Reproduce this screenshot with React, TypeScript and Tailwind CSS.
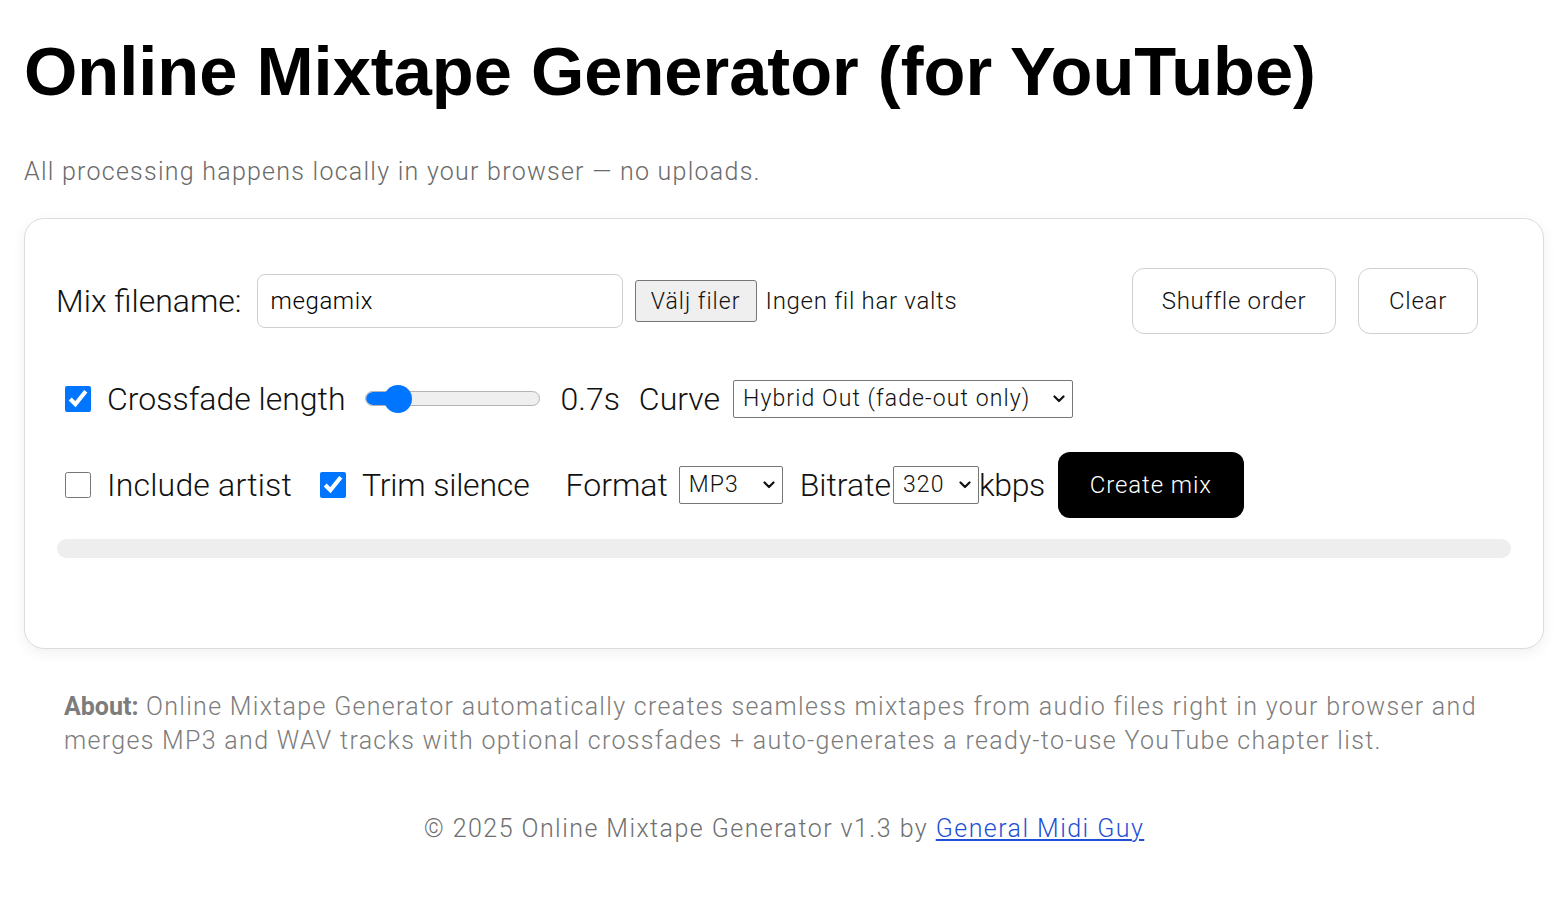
import React from "react";

function Chevron() {
  return (
    <svg width="12" height="8" viewBox="0 0 12 8" className="shrink-0">
      <path d="M1.5 1.5 L6 6 L10.5 1.5" fill="none" stroke="#111" strokeWidth="2.2" strokeLinecap="round" strokeLinejoin="round" />
    </svg>
  );
}

function FakeSelect({ label, width }: { label: string; width: string }) {
  return (
    <div className={`flex items-center justify-between border border-[#767676] rounded-[2px] bg-white pl-[9px] pr-[7px] h-[38px] text-[23px] tracking-[1.1px] text-[#111] ${width}`}>
      <span className="whitespace-nowrap leading-none">{label}</span>
      <Chevron />
    </div>
  );
}

export default function App() {
  return (
    <div className="min-h-[900px] bg-white font-['Roboto',Arial,sans-serif] font-light text-[#111]">
      <h1 className="pt-[38px] px-6 font-['Liberation_Sans',Arial,sans-serif] font-bold text-[68.6px] leading-none text-black whitespace-nowrap">
        Online Mixtape Generator (for YouTube)
      </h1>
      <p className="mt-[52px] px-6 text-[25px] tracking-[1.25px] leading-none text-[#6a6a6a]">
        All processing happens locally in your browser — no uploads.
      </p>

      <div className="mx-6 mt-[34px] border border-[#dcdcdc] rounded-[20px] shadow-[0_4px_14px_rgba(0,0,0,0.06)] bg-white px-[31px] pt-[49px] pb-[90px]">
        {/* Row 1 */}
        <div className="flex items-center h-[66px]">
          <span className="text-[32px] leading-none whitespace-nowrap">Mix filename:</span>
          <div className="ml-[15px] w-[366px] h-[54px] border border-[#cfcfcf] rounded-[8px] flex items-center px-[13px] text-[24px] tracking-[0.6px] text-black">
            megamix
          </div>
          <div className="ml-[12px] h-[42px] w-[122px] flex items-center justify-center bg-[#efefef] border border-[#767676] rounded-[3px] text-[23px] tracking-[1px] whitespace-nowrap">
            <span className="leading-none pt-[2px]">Välj filer</span>
          </div>
          <span className="ml-[9px] text-[24px] tracking-[0.7px] whitespace-nowrap">Ingen fil har valts</span>
          <div className="ml-auto mr-[34px] flex items-center gap-[22px]">
            <div className="w-[204px] h-[66px] border border-[#d0d0d0] rounded-[12px] flex items-center justify-center text-[24px] tracking-[0.7px] whitespace-nowrap">
              Shuffle order
            </div>
            <div className="w-[120px] h-[66px] border border-[#d0d0d0] rounded-[12px] flex items-center justify-center text-[24px] tracking-[0.7px]">
              Clear
            </div>
          </div>
        </div>

        {/* Row 2 */}
        <div className="flex items-center h-[40px] mt-[45px]">
          <input type="checkbox" defaultChecked className="ml-[9px] w-[26px] h-[26px] m-0 accent-[#0075ff]" />
          <span className="ml-[16px] text-[32px] leading-none whitespace-nowrap">Crossfade length</span>
          <div className="ml-[20px] w-[175px] h-[30px] flex items-center relative">
            <div className="w-full h-[15px] rounded-full bg-[#efefef] border border-[#b3b3b3] overflow-hidden">
              <div className="h-full w-[33px] bg-[#0075ff] rounded-full" />
            </div>
            <div className="absolute left-[19px] top-[1px] w-[28px] h-[28px] rounded-full bg-[#0075ff]" />
          </div>
          <span className="ml-[20px] text-[32px] leading-none whitespace-nowrap">0.7s</span>
          <span className="ml-[19px] text-[32px] leading-none whitespace-nowrap">Curve</span>
          <div className="ml-[13px]">
            <FakeSelect label="Hybrid Out (fade-out only)" width="w-[340px]" />
          </div>
        </div>

        {/* Row 3 */}
        <div className="flex items-center h-[66px] mt-[33px]">
          <input type="checkbox" className="ml-[9px] w-[26px] h-[26px] m-0 accent-[#0075ff]" />
          <span className="ml-[16px] text-[32px] tracking-[0.2px] leading-none whitespace-nowrap">Include artist</span>
          <input type="checkbox" defaultChecked className="ml-[28px] w-[26px] h-[26px] m-0 accent-[#0075ff]" />
          <span className="ml-[16px] text-[32px] tracking-[-0.2px] leading-none whitespace-nowrap">Trim silence</span>
          <span className="ml-[36px] text-[32px] leading-none whitespace-nowrap">Format</span>
          <div className="ml-[11px]">
            <FakeSelect label="MP3" width="w-[104px]" />
          </div>
          <span className="ml-[17px] text-[32px] leading-none whitespace-nowrap">Bitrate</span>
          <div className="ml-[2px]">
            <FakeSelect label="320" width="w-[86px]" />
          </div>
          <span className="text-[32px] leading-none tracking-[-0.4px] whitespace-nowrap">kbps</span>
          <div className="ml-[13px] w-[186px] h-[66px] bg-black text-white rounded-[12px] flex items-center justify-center text-[24px] tracking-[0.9px] whitespace-nowrap">
            Create mix
          </div>
        </div>

        {/* Progress */}
        <div className="mt-[21px] mx-[1px] h-[19px] rounded-full bg-[#eeeeee]" />
      </div>

      <p className="mt-[41px] px-[64px] text-[25px] tracking-[1.32px] leading-[34px] text-[#7c7c7c]">
        <b className="font-bold tracking-normal">About:</b>{" "}
        <span>Online Mixtape Generator automatically creates seamless mixtapes from audio files right in your browser and merges MP3 and WAV tracks with optional crossfades + auto-generates a ready-to-use YouTube chapter list.</span>
      </p>

      <p className="mt-[54px] text-center text-[25px] tracking-[1.45px] leading-[34px] text-[#6f6f6f]">
        © 2025 Online Mixtape Generator v1.3 by{" "}
        <a href="#" className="text-[#1f4fd6] underline">General Midi Guy</a>
      </p>
    </div>
  );
}
